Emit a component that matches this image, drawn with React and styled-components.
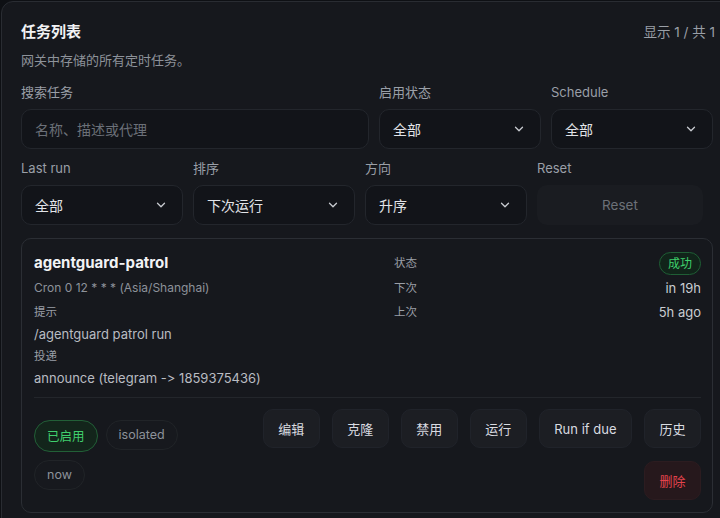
import React from 'react';
import styled, { createGlobalStyle } from 'styled-components';
import { ChevronDown } from 'lucide-react';

const GlobalStyle = createGlobalStyle`
  html, body {
    margin: 0;
    padding: 0;
    background: #0e1014;
    overflow: hidden;
  }
  body {
    font-family: "Inter", "Noto Sans CJK SC", sans-serif;
    font-variant-ligatures: none;
    font-feature-settings: "calt" 0, "liga" 0;
    color: #e4e6ea;
  }
`;

const Panel = styled.section`
  box-sizing: border-box;
  width: 734px;
  margin: 1px 0 0 1px;
  padding: 19px 19px 20px;
  background: #16181d;
  border: 1px solid #292c32;
  border-radius: 12px;
`;

const Header = styled.div`
  display: flex;
  justify-content: space-between;
  align-items: flex-start;
`;

const Title = styled.h2`
  margin: 0;
  font-size: 15px;
  line-height: 22px;
  font-weight: 700;
  color: #f2f3f5;
`;

const Count = styled.div`
  font-size: 13.5px;
  line-height: 22px;
  color: #9a9fa7;
`;

const Subtitle = styled.p`
  margin: 8px 0 0;
  font-size: 13px;
  line-height: 18px;
  color: #8d929a;
`;

const FilterRow = styled.div`
  display: grid;
  grid-template-columns: ${p => p.$cols};
  column-gap: 10px;
  width: 692px;
  margin-top: ${p => p.$top}px;
`;

const Field = styled.label`
  display: flex;
  flex-direction: column;
  gap: 8px;
`;

const Label = styled.span`
  font-size: 13px;
  line-height: 18px;
  color: #9a9fa7;
`;

const Control = styled.div`
  box-sizing: border-box;
  height: 40px;
  display: flex;
  align-items: center;
  justify-content: space-between;
  padding: 0 14px 0 13px;
  background: #121419;
  border: 1px solid #23262c;
  border-radius: 10px;
  font-size: 14px;
  color: ${p => (p.$placeholder ? '#6b7078' : '#e2e4e8')};
`;

const ResetButton = styled.button`
  box-sizing: border-box;
  height: 40px;
  border: none;
  border-radius: 10px;
  background: #1a1c21;
  color: #6c7178;
  font-family: inherit;
  font-size: 13.5px;
`;

const Card = styled.article`
  box-sizing: border-box;
  width: 692px;
  margin-top: 13px;
  padding: 12px 11px 12px 12px;
  border: 1px solid #2b2e34;
  border-radius: 10px;
  background: #16181d;
`;

const CardTop = styled.div`
  display: grid;
  grid-template-columns: 1fr 307px;
  column-gap: 10px;
`;

const Info = styled.div`
  display: flex;
  flex-direction: column;
`;

const JobName = styled.div`
  font-size: 15px;
  font-weight: 700;
  line-height: 24px;
  color: #f2f3f5;
`;

const Meta = styled.div`
  font-size: ${p => (p.$dim ? 12 : 13)}px;
  line-height: 22px;
  color: ${p => (p.$dim ? '#8d929a' : '#b9bcc2')};
  margin-top: ${p => p.$top || 0}px;
`;

const SmallLabel = styled.div`
  font-size: 11.5px;
  line-height: 22px;
  color: #9a9fa7;
  margin-top: ${p => p.$top || 0}px;
`;

const Stats = styled.div`
  display: grid;
  grid-template-columns: auto 1fr;
  grid-auto-rows: 24.5px;
  align-items: center;
`;

const StatValue = styled.div`
  justify-self: end;
  font-size: 13px;
  color: #c9ccd1;
`;

const SuccessBadge = styled.span`
  justify-self: end;
  padding: 2px 8px;
  font-size: 12px;
  line-height: 17px;
  color: #3fcf6c;
  background: #11241a;
  border: 1px solid #1f5e35;
  border-radius: 999px;
`;

const Divider = styled.hr`
  margin: 8px 0 11px;
  border: none;
  border-top: 1px solid #23262b;
`;

const Footer = styled.div`
  display: flex;
  justify-content: space-between;
  align-items: center;
`;

const Chips = styled.div`
  display: flex;
  flex-wrap: wrap;
  gap: 8px;
  width: 160px;
`;

const Chip = styled.span`
  box-sizing: border-box;
  height: ${p => (p.$on ? 32 : 30)}px;
  display: inline-flex;
  align-items: center;
  padding: 0 12px;
  font-size: 12.5px;
  border-radius: 999px;
  color: ${p => (p.$on ? '#40cf6d' : '#8d929a')};
  background: ${p => (p.$on ? '#13251b' : '#17191e')};
  border: 1px solid ${p => (p.$on ? '#225f37' : '#212428')};
`;

const Actions = styled.div`
  display: flex;
  flex-wrap: wrap;
  justify-content: flex-end;
  gap: 13px 12px;
  width: 450px;
`;

const ActionButton = styled.button`
  box-sizing: border-box;
  height: 39px;
  padding: 0 14.5px;
  border-radius: 10px;
  font-family: inherit;
  font-size: 13px;
  color: ${p => (p.$danger ? '#e2434c' : '#d9dbe0')};
  background: ${p => (p.$danger ? '#26181c' : '#1c1e23')};
  border: 1px solid ${p => (p.$danger ? '#2c1c20' : '#20232a')};
`;

const Select = ({ value }) => (
  <Control>
    <span>{value}</span>
    <ChevronDown size={14} strokeWidth={2.2} color="#c9ccd1" />
  </Control>
);

const actions = ['编辑', '克隆', '禁用', '运行', 'Run if due', '历史'];

export default function App() {
  return (
    <>
      <GlobalStyle />
      <Panel>
        <Header>
          <Title>任务列表</Title>
          <Count>显示 1 / 共 1</Count>
        </Header>
        <Subtitle>网关中存储的所有定时任务。</Subtitle>

        <FilterRow $cols="348px 162px 162px" $top={14}>
          <Field>
            <Label>搜索任务</Label>
            <Control $placeholder>名称、描述或代理</Control>
          </Field>
          <Field>
            <Label>启用状态</Label>
            <Select value="全部" />
          </Field>
          <Field>
            <Label>Schedule</Label>
            <Select value="全部" />
          </Field>
        </FilterRow>

        <FilterRow $cols="162px 162px 162px 166px" $top={10}>
          <Field>
            <Label>Last run</Label>
            <Select value="全部" />
          </Field>
          <Field>
            <Label>排序</Label>
            <Select value="下次运行" />
          </Field>
          <Field>
            <Label>方向</Label>
            <Select value="升序" />
          </Field>
          <Field>
            <Label>Reset</Label>
            <ResetButton>Reset</ResetButton>
          </Field>
        </FilterRow>

        <Card>
          <CardTop>
            <Info>
              <JobName>agentguard-patrol</JobName>
              <Meta $dim $top={2}>Cron 0 12 * * * (Asia/Shanghai)</Meta>
              <SmallLabel $top={2}>提示</SmallLabel>
              <Meta>/agentguard patrol run</Meta>
              <SmallLabel>投递</SmallLabel>
              <Meta>announce (telegram -&gt; 1859375436)</Meta>
            </Info>
            <Stats>
              <SmallLabel>状态</SmallLabel>
              <SuccessBadge>成功</SuccessBadge>
              <SmallLabel>下次</SmallLabel>
              <StatValue>in 19h</StatValue>
              <SmallLabel>上次</SmallLabel>
              <StatValue>5h ago</StatValue>
            </Stats>
          </CardTop>
          <Divider />
          <Footer>
            <Chips>
              <Chip $on>已启用</Chip>
              <Chip>isolated</Chip>
              <Chip>now</Chip>
            </Chips>
            <Actions>
              {actions.map(a => (
                <ActionButton key={a}>{a}</ActionButton>
              ))}
              <ActionButton $danger>删除</ActionButton>
            </Actions>
          </Footer>
        </Card>
      </Panel>
    </>
  );
}
